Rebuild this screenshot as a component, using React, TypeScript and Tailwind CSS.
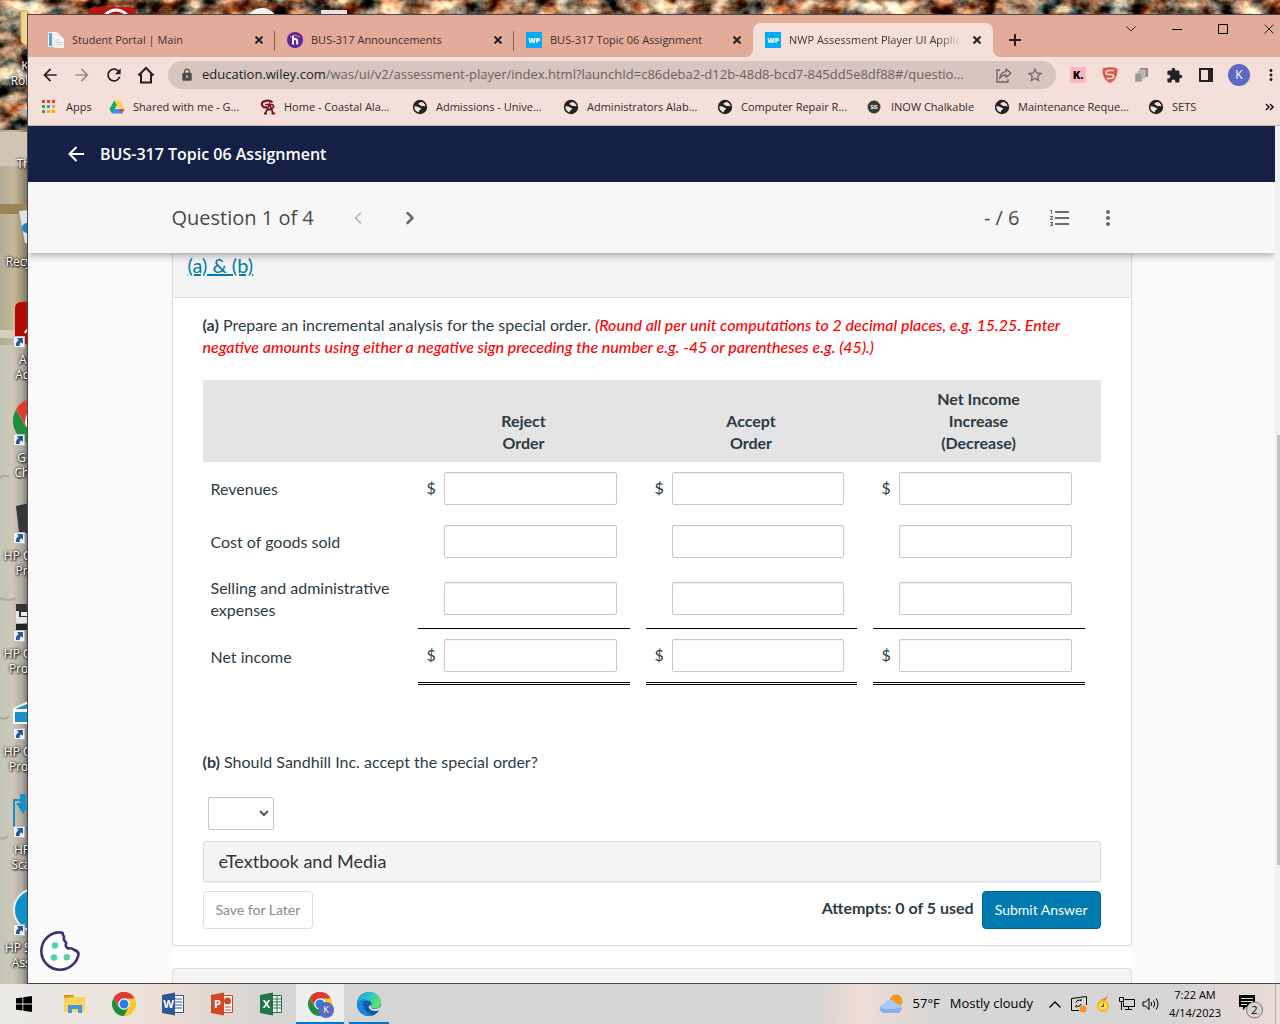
import clsx from 'clsx';
import React, { FC, ReactNode, useState } from 'react';
import { FiChevronLeft, FiChevronRight } from 'react-icons/fi';
import {
  MdArrowBack,
  MdArrowForward,
  MdExtension,
  MdFormatListNumbered,
  MdLock,
  MdMoreVert,
  MdRefresh,
  MdStarBorder,
} from 'react-icons/md';

const UI = "font-['Open_Sans','Noto_Sans',sans-serif]";

/* ---------- small drawings ---------- */

const ChromeIcon: FC<{ size: number; badge?: boolean }> = ({ size, badge }) => (
  <svg width={size} height={size} viewBox="0 0 48 48" aria-hidden="true" className="overflow-visible">
    <circle cx="24" cy="24" r="24" fill="#fff" />
    <path d="M24 24 3.2 12a24 24 0 0 1 41.6 0z" fill="#dd3b30" />
    <path d="M24 24 44.8 12A24 24 0 0 1 24 48z" fill="#fcc934" />
    <path d="M24 24v0L13.6 30 3.2 12A24 24 0 0 0 24 48l10.4-18z" fill="#1e8e3e" />
    <path d="M24 13h21.3A24 24 0 0 0 3.2 12l10.6 18z" fill="#dd3b30" />
    <path d="M24 13h21.3A24 24 0 0 1 24 48l10-18z" fill="#fcc934" />
    <circle cx="24" cy="24" r="11.5" fill="#fff" />
    <circle cx="24" cy="24" r="9" fill="#2b7de9" />
    {badge && (
      <>
        <circle cx="36" cy="36" r="16" fill="#5c6bc0" />
        <text x="36" y="42" fontSize="18" fill="#fff" textAnchor="middle" fontFamily="Open Sans, sans-serif">
          K
        </text>
      </>
    )}
  </svg>
);

const PageIcon = () => (
  <svg width="16" height="16" viewBox="0 0 16 16" aria-hidden="true">
    <path d="M0 0h9l3 3v12H0z" fill="#f3f6f8" />
    <path d="M1 1h3v13H1z" fill="#5ea4cf" />
    <path d="M6 3h6l4 4v9H6z" fill="#fafafa" stroke="#d5d5d5" strokeWidth=".6" />
    <path d="M7.500 8h5M7.500 10.500h7M7.500 13h7" stroke="#c3c9cd" />
  </svg>
);

const HIcon = () => (
  <svg width="16" height="16" viewBox="0 0 16 16" aria-hidden="true">
    <circle cx="8" cy="8" r="8" fill="#5b259f" />
    <path d="M6 4v8.500M6 9c0-2.600 4.200-2.600 4.200 0v3.500" stroke="#fff" strokeWidth="2" fill="none" />
    <path d="M3 5l5-2 5 2" stroke="#e8a33d" fill="none" />
  </svg>
);

const WpIcon = () => (
  <svg width="16" height="16" viewBox="0 0 16 16" aria-hidden="true">
    <path d="M0 0h16v16H0z" fill="#05a9f4" />
    <text x="8" y="10.500" fontSize="7" fontWeight="800" fill="#fff" textAnchor="middle" fontFamily="Open Sans, sans-serif">
      WP
    </text>
  </svg>
);

const AppsIcon = () => (
  <svg width="14" height="14" viewBox="0 0 14 14" aria-hidden="true">
    <path d="M0 0h3v3H0zM5 0h3v3H5zM10 0h3v3h-3z" fill="#ea4335" />
    <path d="M0 5h3v3H0z" fill="#34a853" />
    <path d="M5 5h3v3H5z" fill="#4285f4" />
    <path d="M10 5h3v3h-3zM5 10h3v3H5zM10 10h3v3h-3z" fill="#fbaa05" />
    <path d="M0 10h3v3H0z" fill="#34a853" />
  </svg>
);

const DriveIcon = () => (
  <svg width="16" height="16" viewBox="0 0 16 16" aria-hidden="true">
    <path d="M5.300 1.500 0.500 10l2.600 4.500L8 6.200z" fill="#11a861" />
    <path d="M5.300 1.500h5.400L15.500 10h-5.300z" fill="#ffcf48" />
    <path d="M5.800 10h9.700L13 14.500H3.100z" fill="#4688f4" />
    <path d="M12.800 10.200h2.700L13 14.500l-2.300-4.300z" fill="#e5483b" />
  </svg>
);

const CoastalIcon = () => (
  <svg width="16" height="16" viewBox="0 0 16 16" fill="none" stroke="#7a1128" aria-hidden="true">
    <path d="M12.500 3.500C9.500.500 2 1.500 1.800 5 1.700 8 4.500 9 7 8" strokeWidth="2.200" />
    <path d="M5.500 14 9.500 5l3.500 9M6.500 10.500h6M4 14.500h3M11.500 14.500H15" strokeWidth="1.800" />
    <path d="M5 5.500h6c3.500 0 3.500 4 0 4" strokeWidth="1.600" />
  </svg>
);

const GlobeIcon = () => (
  <svg width="16" height="16" viewBox="0 0 16 16" aria-hidden="true">
    <circle cx="8" cy="8" r="7.200" fill="#202124" />
    <path
      d="M2.300 7.400c1.700-.3 3.500 0 4.800 1 .8.600 2 .4 2 1.300 0 1.100-1.600.8-1.700 1.900 0 .7-.7.900-.7 1.800C4 12.600 2.200 10.200 2.300 7.400zM9.500 3C7.500 3 7.800 4 6.800 4.300c-.8.400-.4 1.500.5 1.400 1-.1 1.200 1 2.100 1.300 1.400.5 2.800.2 4.200.5C13.400 5.500 11.800 3.400 9.500 3z"
      fill="#f5e0d9"
    />
  </svg>
);

const SisIcon = () => (
  <svg width="14" height="14" viewBox="0 0 14 14" aria-hidden="true">
    <circle cx="7" cy="7" r="6.500" fill="#3b3b3b" />
    <text x="7" y="9" fontSize="5" fontWeight="700" fill="#fff" textAnchor="middle" fontFamily="Open Sans, sans-serif">
      SIS
    </text>
  </svg>
);

const CloseIcon: FC<{ size?: number; width?: number }> = ({ size = 8, width = 2 }) => (
  <svg width={size} height={size} viewBox="0 0 8 8" stroke="#202124" aria-hidden="true">
    <path d="M.5.500l7 7M7.500.500l-7 7" strokeWidth={(width * 8) / size} fill="none" />
  </svg>
);

const CookieIcon = () => (
  <svg width="40" height="40" viewBox="0 0 40 40" aria-hidden="true">
    <path
      d="M22.500 1.700C11.500-.2 1.500 8.500 1.300 20c0 10.300 8.400 18.700 18.700 18.700 9.400 0 17.500-7 18.600-16.200-1.300-2.300-2.800-3.300-4.600-3.600-1.400-1.500-3.300-1.800-5.500-1.500-3-.6-3.200-3.300-2.300-5.600-2.500-1.900-3-3.800-2.200-6.200-1.200-1.200-1.400-2.500-1.500-3.900z"
      fill="#fff"
      stroke="#3b3473"
      strokeWidth="2.600"
      strokeLinejoin="round"
    />
    <circle cx="15" cy="14.500" r="3.200" fill="#4cd49c" />
    <circle cx="14" cy="26.500" r="3.200" fill="#4cd49c" />
    <circle cx="26.800" cy="26.200" r="3.200" fill="#4cd49c" />
  </svg>
);

/* ---------- desktop ---------- */

const Wallpaper = () => (
  <svg className="absolute inset-0 -z-10 h-full w-full" preserveAspectRatio="none" aria-hidden="true">
    <defs>
      <filter id="stones" x="0" y="0" width="100%" height="100%" colorInterpolationFilters="sRGB">
        <feTurbulence type="fractalNoise" baseFrequency=".045 .06" numOctaves="4" seed="8" />
        <feColorMatrix values="2.200 0 0 0 -.54  1.900 .6 0 0 -.81  1.600 .8 0 0 -.86  0 0 0 0 1" />
      </filter>
      <linearGradient id="plaster" x1="0" y1="0" x2="1" y2="0">
        <stop offset="0" stopColor="#b3ae98" />
        <stop offset=".5" stopColor="#c4b897" />
        <stop offset=".75" stopColor="#a5997d" />
        <stop offset="1" stopColor="#77705f" />
      </linearGradient>
      <linearGradient id="pillar" x1="0" y1="0" x2="28" y2="0" gradientUnits="userSpaceOnUse">
        <stop offset="0" stopColor="#c2c6b8" />
        <stop offset=".45" stopColor="#cfc8b6" />
        <stop offset=".8" stopColor="#aaa89f" />
        <stop offset="1" stopColor="#77766f" />
      </linearGradient>
    </defs>
    <rect width="100%" height="134" filter="url(#stones)" />
    <rect y="130" width="28" height="240" fill="url(#plaster)" />
    <rect y="132" width="28" height="34" fill="#cfc4b6" />
    <rect y="204" width="28" height="10" fill="#9c8357" />
    <rect y="330" width="28" height="8" fill="#d6cfba" />
    <rect y="345" width="28" height="700" fill="url(#pillar)" />
    <path d="M0 478q5-4 9-1M0 598q8 4 16 0M0 718q6 2 9-2M0 838q5 2 8-2" stroke="#aaa995" strokeWidth="2" fill="none" />
    {/* tops of the icons in the first row, above the window */}
    <rect x="88" y="7" width="48" height="30" rx="6" fill="#b81414" />
    <circle cx="116" cy="24" r="14" fill="none" stroke="#fff" strokeWidth="3" />
    <circle cx="262" cy="24" r="16" fill="#f4f4f4" />
    <path d="M321 10h26v10h-26z" fill="#e5e5e5" />
  </svg>
);

const Shortcut = () => (
  <svg className="absolute bottom-0 left-0" width="12" height="12" viewBox="0 0 12 12" aria-hidden="true">
    <path d="M.500.500h11v11H.500z" fill="#f1f3f6" stroke="#b9bfc6" />
    <path d="M4 2h6v6L8.200 6.200C6.800 7.200 6.500 8.500 6.800 10H3c-.5-2.500.5-4.500 2.600-5.800z" fill="#2b5797" />
  </svg>
);

interface DesktopItem {
  lines: string[];
  art: ReactNode;
  link?: boolean;
}

const desktopItems: DesktopItem[] = [
  { lines: ['Kathy', 'Robinson'], art: <path d="M8 3h30v36l-26-2-4-4z" fill="#ecd78c" stroke="#c9ae5d" /> },
  { lines: ['This PC'], art: <path d="M2 6 18 2l26 4-20 6z" fill="#aab0b3" /> },
  {
    lines: ['Recycle Bin'],
    art: (
      <>
        <path d="M6 7 42 4l-6 38-24-3z" fill="#dfe3e6" />
        <circle cx="14" cy="24" r="5" fill="#1d7fd1" />
      </>
    ),
  },
  {
    lines: ['Adobe', 'Acrobat'],
    link: true,
    art: (
      <>
        <rect x="2" width="44" height="42" rx="6" fill="#b30b00" />
        <path d="M12 31c1-4 8-5 12-21" stroke="#fff" strokeWidth="2" fill="none" />
      </>
    ),
  },
  { lines: ['Google', 'Chrome'], link: true, art: <g transform="translate(0 -2)"><ChromeIcon size={46} /></g> },
  { lines: ['HP OfficeJet', 'Pro 802'], link: true, art: <path d="M3 8 30 2v36L6 34z" fill="#34383b" /> },
  {
    lines: ['HP OfficeJet', 'Pro Series'],
    link: true,
    art: (
      <>
        <path d="M3 8h34v7H3z" fill="#333" />
        <path d="M3 15h34v12H3z" fill="#e5e5e5" />
        <path d="M6 15h31v6H6z" fill="#333" />
        <path d="M3 28h34v6H3z" fill="#222" />
        <path d="M8 16h12v4H8z" fill="#eee" />
      </>
    ),
  },
  {
    lines: ['HP OfficeJet', 'Pro Series'],
    link: true,
    art: (
      <>
        <path d="M0 14 26 2v28H0z" fill="#f7f7f7" />
        <path d="M2 15 26 5v6L12 15zM2 18h24v10H2z" fill="#1690c6" />
      </>
    ),
  },
  {
    lines: ['HP Print', 'Scan Doc'],
    link: true,
    art: (
      <>
        <path d="M8 8H1v28h28" stroke="#1690c6" strokeWidth="2" fill="none" />
        <path d="M7 2h6v9h4l-7 11L3 11h4z" fill="#1690c6" />
      </>
    ),
  },
  { lines: ['HP Support', 'Assistant'], link: true, art: <circle cx="22" cy="20" r="21" fill="#0e8fce" stroke="#f2f2f2" strokeWidth="2" /> },
];

const Desktop = () => (
  <ul className="w-[27px] shrink-0 overflow-hidden">
    {desktopItems.map((item, i) => (
      <li key={i} className="flex h-[98px] w-[74px] flex-col items-center pt-1.5">
        <div className="relative h-12 w-12">
          <svg width="46" height="48" viewBox="0 0 46 44" aria-hidden="true">
            {item.art}
          </svg>
          {item.link && <Shortcut />}
        </div>
        <div className="pt-1 text-center text-xs leading-[15px] whitespace-nowrap text-white [text-shadow:1px_1px_2px_#000,0_0_3px_#000]">
          {item.lines.map((line) => (
            <div key={line}>{line}</div>
          ))}
        </div>
      </li>
    ))}
  </ul>
);

/* ---------- browser ---------- */

const tabs = [
  { title: 'Student Portal | Main', icon: <PageIcon /> },
  { title: 'BUS-317 Announcements', icon: <HIcon /> },
  { title: 'BUS-317 Topic 06 Assignment', icon: <WpIcon /> },
  { title: 'NWP Assessment Player UI Application', icon: <WpIcon />, active: true },
];

const TabStrip = () => (
  <div className="flex h-[42px] items-end bg-[#e3ab9a] pl-2">
    {tabs.map((tab, i) => (
      <div
        key={tab.title}
        className={clsx(
          'relative flex h-[34px] items-center px-3 text-[#45302c]',
          tab.active
            ? 'w-[240px] rounded-t-lg bg-[#f5e0d9] before:absolute before:bottom-0 before:-left-2 before:size-2 before:bg-[radial-gradient(circle_at_0_0,transparent_8px,#f5e0d9_8px)] after:absolute after:-right-2 after:bottom-0 after:size-2 after:bg-[radial-gradient(circle_at_100%_0,transparent_8px,#f5e0d9_8px)]'
            : 'w-[239px]'
        )}
      >
        <span className="mr-2 shrink-0">{tab.icon}</span>
        <span
          className={clsx(
            'min-w-0 flex-1 overflow-hidden text-[11px] whitespace-nowrap',
            tab.active && '[mask-image:linear-gradient(to_right,#000_85%,transparent_98%)]'
          )}
        >
          {tab.title}
        </span>
        <button aria-label="Close tab" className="ml-2">
          <CloseIcon />
        </button>
        {i < 2 && <span className="absolute top-2 right-0 h-5 w-px bg-[#8a5f54]" />}
      </div>
    ))}
    <button aria-label="New tab" className="flex h-[34px] w-11 items-center justify-center">
      <svg width="12" height="12" viewBox="0 0 12 12" stroke="#202124" strokeWidth="2">
        <path d="M6 0v12M0 6h12" />
      </svg>
    </button>
    <div className="ml-auto flex h-full shrink-0 items-start text-[#202124]">
      <button aria-label="Search tabs" className="flex h-[28px] w-[46px] items-center justify-center">
        <svg width="10" height="6" viewBox="0 0 10 6" fill="none" stroke="currentColor">
          <path d="M.500.500 5 5 9.500.500" />
        </svg>
      </button>
      <button aria-label="Minimize" className="flex h-[28px] w-[46px] items-center justify-center">
        <span className="h-px w-2.5 bg-black" />
      </button>
      <button aria-label="Maximize" className="flex h-[28px] w-[46px] items-center justify-center">
        <span className="size-2.5 border border-black" />
      </button>
      <button aria-label="Close" className="flex h-[28px] w-[34px] items-center justify-center pl-3">
        <CloseIcon size={10} width={1} />
      </button>
    </div>
  </div>
);

const Toolbar = () => (
  <div className="flex h-9 items-center bg-[#f5e0d9] pl-3 text-[#202124]">
    <div className="flex shrink-0 items-center gap-3">
      <button aria-label="Back"><MdArrowBack size={20} /></button>
      <button aria-label="Forward" className="text-[#9b8f8b]"><MdArrowForward size={20} /></button>
      <button aria-label="Reload"><MdRefresh size={20} /></button>
      <button aria-label="Home">
        <svg width="20" height="20" viewBox="0 0 20 20" fill="none" stroke="currentColor" strokeWidth="2">
          <path d="M2.500 10.500 10 3l7.500 7.500M5 9v8.500h10V9" />
        </svg>
      </button>
    </div>
    <div className="ml-3 flex h-7 min-w-0 flex-1 items-center rounded-full bg-[#d7c5be] px-3">
      <MdLock size={14} className="mr-2 shrink-0 text-[#4d4a4a]" />
      <div className="min-w-0 flex-1 overflow-hidden text-[13px] whitespace-nowrap text-[#6b6260]">
        <span className="text-[#202124]">education.wiley.com</span>
        /was/ui/v2/assessment-player/index.html?launchId=c86deba2-d12b-48d8-bcd7-845dd5e8df88#/questio...
      </div>
      <button aria-label="Share" className="ml-3 shrink-0 text-[#6b6260]">
        <svg width="16" height="16" viewBox="0 0 16 16" fill="none" stroke="currentColor" strokeWidth="1.300">
          <path d="M4 3H1v12h11v-3" />
          <path d="M10 2l5 4.200-5 4.200V8C7 8 5 9 3.500 11.500 4 7.500 6.500 5 10 4.600z" strokeLinejoin="round" />
        </svg>
      </button>
      <button aria-label="Bookmark this page" className="ml-[14px] shrink-0 text-[#6b6260]"><MdStarBorder size={18} /></button>
    </div>
    <div className="ml-3 flex shrink-0 items-center gap-3">
      <button className="flex size-5 items-center justify-center" aria-label="Klarna">
        <span className="flex size-4 items-center justify-center bg-[#ffb3c7] text-[11px] font-extrabold text-black">K.</span>
      </button>
      <button className="flex size-5 items-center justify-center" aria-label="Shield extension">
        <svg width="16" height="16" viewBox="0 0 16 16">
          <path d="M.500 1.500Q8-1 15.500 1.500C16 9 13 14 8 16 3 14 0 9 .500 1.500z" fill="#d95b48" />
          <path d="M12 3.500H7C3 3.500 3 7.500 6.500 7.500H9c3.500 0 3.500 4 0 4H4.500" stroke="#f5e0d9" strokeWidth="1.600" fill="none" />
        </svg>
      </button>
      <button className="flex size-5 items-center justify-center" aria-label="Copy extension">
        <svg width="16" height="14" viewBox="0 0 16 14">
          <path d="M6 0h8v9H6z" fill="#8d8986" />
          <path d="M4 2h7v9H4z" fill="#b5b0ad" stroke="#f5e0d9" strokeWidth=".5" />
          <path d="M1 5h7v9H1z" fill="#9d9996" stroke="#f5e0d9" strokeWidth=".5" />
        </svg>
      </button>
      <button aria-label="Extensions" className="flex size-5 items-center justify-center"><MdExtension size={17} /></button>
      <button aria-label="Side panel" className="flex size-5 items-center justify-center">
        <span className="h-[14px] w-[14px] border-2 border-r-[5px] border-[#202124]" />
      </button>
      <button aria-label="Profile" className="flex size-[22px] items-center justify-center rounded-full bg-[#5c6bc0] text-xs text-white">
        K
      </button>
      <button aria-label="Menu"><MdMoreVert size={18} /></button>
    </div>
  </div>
);

const bookmarks = [
  { title: 'Apps', icon: <AppsIcon />, width: 'w-[67px]' },
  { title: 'Shared with me - G...', icon: <DriveIcon />, width: 'w-[151px]' },
  { title: 'Home - Coastal Ala...', icon: <CoastalIcon />, width: 'w-[152px]' },
  { title: 'Admissions - Unive...', icon: <GlobeIcon />, width: 'w-[151px]' },
  { title: 'Administrators Alab...', icon: <GlobeIcon />, width: 'w-[154px]' },
  { title: 'Computer Repair R...', icon: <GlobeIcon />, width: 'w-[150px]' },
  { title: 'INOW Chalkable', icon: <SisIcon />, width: 'w-[127px]' },
  { title: 'Maintenance Reque...', icon: <GlobeIcon />, width: 'w-[154px]' },
  { title: 'SETS', icon: <GlobeIcon />, width: 'w-[60px]' },
];

const BookmarkBar = () => (
  <nav className="flex h-[33px] items-center border-b border-[#c9b8b2] bg-[#f5e0d9] pb-1 pl-[14px] text-[11px] text-[#33292a]">
    {bookmarks.map((b) => (
      <a key={b.title} href="#" className={clsx('flex shrink-0 items-center whitespace-nowrap', b.width)}>
        <span className="flex w-6 shrink-0 items-center">{b.icon}</span>
        {b.title}
      </a>
    ))}
    <button aria-label="More bookmarks" className="mr-1.5 ml-auto">
      <svg width="9" height="8" viewBox="0 0 9 8" fill="none" stroke="#202124" strokeWidth="1.600">
        <path d="M1 1l3 3-3 3M5 1l3 3-3 3" />
      </svg>
    </button>
  </nav>
);

/* ---------- assessment page ---------- */

const columns = [['Reject', 'Order'], ['Accept', 'Order'], ['Net Income', 'Increase', '(Decrease)']];

const rows = [
  { label: 'Revenues', dollar: true, cell: 'h-[53px]' },
  { label: 'Cost of goods sold', dollar: false, cell: 'h-[53px]' },
  { label: 'Selling and administrative expenses', dollar: false, cell: 'h-[61px] border-b border-black' },
  { label: 'Net income', dollar: true, cell: 'h-[56px] border-b-3 border-double border-black' },
];

const AnalysisTable = () => (
  <table className="mt-[22px] w-full table-fixed border-collapse">
    <colgroup>
      <col />
      <col className="w-[228px]" />
      <col className="w-[227px]" />
      <col className="w-[228px]" />
      <col className="w-2" />
    </colgroup>
    <thead>
      <tr className="bg-[#e4e4e4]">
        <td />
        {columns.map((words) => (
          <th key={words[0]} scope="col" className="py-2 text-center align-bottom font-bold">
            {words.map((w) => (
              <span key={w} className="block">{w}</span>
            ))}
          </th>
        ))}
        <td />
      </tr>
    </thead>
    <tbody>
      {rows.map((row) => (
        <tr key={row.label}>
          <th scope="row" className="px-2 text-left font-normal">{row.label}</th>
          {columns.map((words) => (
            <td key={words[0]} className="px-2 py-0">
              <div className={clsx('flex items-center pr-[13px] pl-[9px]', row.cell)}>
                <span className="w-[17px] shrink-0 pb-0.5">{row.dollar && '$'}</span>
                <input
                  type="text"
                  aria-label={`${row.label}, ${words.join(' ')}`}
                  className="h-[33px] w-full min-w-0 rounded-xs border border-[#c8c8c8] bg-white px-2 inset-shadow-2xs"
                />
              </div>
            </td>
          ))}
          <td />
        </tr>
      ))}
    </tbody>
  </table>
);

const QuestionBar = () => (
  <div className="relative z-10 h-[71px] shrink-0 bg-[#f7f7f7] text-xl text-[#494949] shadow-[0_2px_8px_rgba(0,0,0,0.35)]">
    <div className="mx-auto flex h-full max-w-[960px] items-center">
      <h2>Question 1 of 4</h2>
      <div className="ml-5 flex gap-1">
        <button aria-label="Previous question" className="flex size-12 items-center justify-center text-[#b5b5b5]">
          <FiChevronLeft size={20} />
        </button>
        <button aria-label="Next question" className="flex size-12 items-center justify-center text-[#6b6b6b]">
          <FiChevronRight size={20} strokeWidth={3} />
        </button>
      </div>
      <span className="mr-4 ml-auto">- / 6</span>
      <button aria-label="Question list" className="flex size-12 items-center justify-center text-[#6b6b6b]">
        <MdFormatListNumbered size={24} />
      </button>
      <button aria-label="More options" className="flex size-12 items-center justify-center text-[#6b6b6b]">
        <MdMoreVert size={24} />
      </button>
    </div>
  </div>
);

const Player = () => {
  const [decision, setDecision] = useState<string>('');

  return (
    <main className="relative flex min-h-0 min-w-0 flex-1 flex-col overflow-hidden bg-[#fafafa]">
      <header className="flex h-14 shrink-0 items-center gap-4 bg-[#142045] pl-10 text-white">
        <button aria-label="Back to course">
          <svg width="16" height="16" viewBox="0 0 16 16" fill="none" stroke="currentColor" strokeWidth="2">
            <path d="M16 8H2M8.500 1 1.500 8l7 7" />
          </svg>
        </button>
        <h1 className="font-semibold">BUS-317 Topic 06 Assignment</h1>
      </header>
      <QuestionBar />
      <div className="mx-auto min-h-0 w-full max-w-[960px] flex-1 bg-white font-['Lato',sans-serif] text-base leading-[22px] text-[#2d3b45]">
        <section className="rounded-b-sm border border-t-0 border-[#ddd] shadow-xs">
          <div className="border-b border-[#ddd] bg-[#f4f4f4] px-[15px] pb-5 text-xl leading-6">
            <a href="#" className="text-[#007aaf] underline">(a) &amp; (b)</a>
          </div>
          <div className="px-[30px] py-4">
            <p>
              <b>(a)</b> Prepare an incremental analysis for the special order.{' '}
              <em className="font-medium text-[#f00]">
                (Round all per unit computations to 2 decimal places, e.g. 15.25. Enter negative amounts using either a
                negative sign preceding the number e.g. -45 or parentheses e.g. (45).)
              </em>
            </p>
            <AnalysisTable />
            <p className="mt-[66px]">
              <b>(b)</b> Should Sandhill Inc. accept the special order?
            </p>
            <div className="relative mt-6 ml-[5px] w-[66px]">
              <select
                aria-label="Accept the special order?"
                value={decision}
                onChange={(e) => setDecision(e.target.value)}
                className="block h-[33px] w-full appearance-none rounded-xs border border-[#c8c8c8] bg-white px-1 inset-shadow-2xs"
              >
                <option value=""></option>
                <option value="yes">Yes</option>
                <option value="no">No</option>
              </select>
              <svg className="pointer-events-none absolute top-3 right-1" width="12" height="9" viewBox="0 0 12 9">
                <path d="M2 2l4 4 4-4" fill="none" stroke="#555" strokeWidth="2" />
              </svg>
            </div>
            <button className="mt-[11px] block h-[41px] w-full rounded-xs border border-[#ddd] bg-[#f4f4f4] px-[15px] pb-0.5 text-left text-lg leading-5 text-[#333] shadow-2xs">
              eTextbook and Media
            </button>
            <div className="mt-[9px] flex">
              <button className="h-[38px] rounded-sm border border-[#ddd] bg-white px-3 text-sm text-[#8a8a8a]">Save for Later</button>
              <span className="mr-2 ml-auto pt-1.5 font-bold">Attempts: 0 of 5 used</span>
              <button className="h-[38px] rounded-sm border border-[#00658f] bg-[#007aaf] px-3 text-sm text-white">
                Submit Answer
              </button>
            </div>
          </div>
        </section>
        <section className="mt-[22px] h-10 rounded-t-sm border border-[#ddd] bg-[#f4f4f4]" />
      </div>
      <button aria-label="Cookie preferences" className="absolute bottom-3 left-3">
        <CookieIcon />
      </button>
    </main>
  );
};

/* ---------- taskbar ---------- */

const OfficeIcon: FC<{ letter: string; color: string; children: ReactNode }> = ({ letter, color, children }) => (
  <svg width="24" height="24" viewBox="0 0 24 24" aria-hidden="true">
    <path d="M12 3.500h10.500v17H12z" fill="#fff" stroke={color} />
    {children}
    <path d="M1 3 14 .500v23L1 21z" fill={color} />
    <text x="7.500" y="16" fontSize="11" fontWeight="700" fill="#fff" textAnchor="middle" fontFamily="Open Sans, sans-serif">
      {letter}
    </text>
  </svg>
);

const pinned = [
  {
    name: 'File Explorer',
    icon: (
      <svg width="24" height="24" viewBox="0 0 24 24">
        <path d="M1 3h9l2 3H1z" fill="#d99a06" />
        <path d="M1 6l10-1h11v15H1z" fill="#ffd35c" />
        <path d="M5 21v-8h14v8h-4v-4H9v4z" fill="#3f9bdc" />
      </svg>
    ),
  },
  { name: 'Google Chrome', icon: <ChromeIcon size={24} /> },
  {
    name: 'Word',
    icon: (
      <OfficeIcon letter="W" color="#2b579a">
        <path d="M14 7h7M14 10h7M14 13h7M14 16h7" stroke="#2b579a" strokeWidth="1.200" />
      </OfficeIcon>
    ),
  },
  {
    name: 'PowerPoint',
    icon: (
      <OfficeIcon letter="P" color="#d24726">
        <path d="M15 15h6M15 18h6" stroke="#d24726" strokeWidth="1.200" />
        <circle cx="17.500" cy="9" r="3.500" fill="#d24726" />
      </OfficeIcon>
    ),
  },
  {
    name: 'Excel',
    icon: (
      <OfficeIcon letter="X" color="#217346">
        <path d="M14 7h8M14 10h8M14 13h8M14 16h8M18 4v16" stroke="#217346" />
      </OfficeIcon>
    ),
  },
  { name: 'Chrome - K', icon: <ChromeIcon size={24} badge />, cls: 'bg-[#eeeeee] border-b-2 border-[#0078d7] pt-0.5' },
  {
    name: 'Microsoft Edge',
    cls: 'relative after:absolute after:bottom-0 after:left-1 after:h-0.5 after:w-10 after:bg-[#0078d7]',
    icon: (
      <svg width="24" height="24" viewBox="0 0 24 24">
        <defs>
          <linearGradient id="edgeTop" x1="0" y1="0" x2="1" y2=".4">
            <stop offset="0" stopColor="#1f9fdf" />
            <stop offset=".5" stopColor="#2cc3d6" />
            <stop offset="1" stopColor="#5fe06a" />
          </linearGradient>
        </defs>
        <circle cx="12" cy="12" r="12" fill="#0c59a4" />
        <path d="M0 12C0 5 5.500 0 12 0s12 5 12 10.500c0 4-3 6-6.500 6-3 0-4-1-3.300-2.500 1-2 .3-5.500-4.200-5.500C5 8.500 1 10 0 12z" fill="url(#edgeTop)" />
        <path d="M0 12c1-3 5-5.500 9-4.500-4 2-3.500 8 .5 12 2 2 4.500 3.500 7 3.500C9 26 0 21 0 12z" fill="#1787d8" />
        <path d="M14.200 14c-.7 1.500.3 3 3.300 3 2.500 0 4.500-.8 6.500-3v3l-2 1.500c-3 1-8 .5-9.800-2-1.200-2 .5-4.500 2-2.500z" fill="#d9dde0" />
      </svg>
    ),
  },
];

const Taskbar = () => (
  <footer className="flex h-10 shrink-0 items-stretch bg-[linear-gradient(to_right,#e8e8e5_0%,#ebe4de_9%,#ecdcd2_13%,#d6d5d4_20%,#d6d5d5_64%,#f0ddd4_67%,#d6d6d6_73%,#d6d5d5_92%,#eadbd5_100%)] text-black">
    <button aria-label="Start" className="flex w-[51px] items-center pl-4">
      <svg width="16" height="16" viewBox="0 0 16 16">
        <path d="M0 2.300 6.500 1.400v6.200H0zM7.300 1.300 16 0v7.600H7.300zM0 8.400h6.500v6.200L0 13.700zM7.300 8.400H16V16l-8.700-1.300z" />
      </svg>
    </button>
    <div className="flex gap-px">
      {pinned.map((p) => (
        <button key={p.name} aria-label={p.name} className={clsx('flex w-12 items-center justify-center', p.cls)}>
          {p.icon}
        </button>
      ))}
    </div>
    <div className="ml-auto flex items-center">
      <button className="mr-[10px] flex items-center gap-2.5 text-[13px] whitespace-nowrap">
        <svg width="24" height="20" viewBox="0 0 24 20">
          <circle cx="17" cy="7" r="6.500" fill="#f59a1b" />
          <path d="M5 19a4.500 4.500 0 0 1 0-9 6.500 6.500 0 0 1 12-.5A5 5 0 0 1 19 19z" fill="#a9c8f5" />
          <path d="M5 19a4.500 4.500 0 0 1-3.500-6c5 3 14 3 21 0A5 5 0 0 1 19 19z" fill="#86aeea" />
        </svg>
        <span>57°F</span>
        <span>Mostly cloudy</span>
      </button>
      <div className="flex">
        <button aria-label="Show hidden icons" className="flex w-6 items-center justify-center">
          <svg width="12" height="7" viewBox="0 0 12 7" fill="none" stroke="#000" strokeWidth="1.300">
            <path d="M.500 6.500 6 1l5.500 5.500" />
          </svg>
        </button>
        <button aria-label="Update" className="flex w-6 items-center justify-center">
          <svg width="18" height="18" viewBox="0 0 18 18" fill="none" stroke="#000">
            <path d="M9 15.500H1.500v-12l15-2V10" />
            <path d="M6 7.500a3 3 0 0 1 5-1.500V4M11 9a3 3 0 0 1-5 1.500v2" />
            <circle cx="13" cy="14" r="3.500" fill="#f7941d" stroke="none" />
          </svg>
        </button>
        <button aria-label="Reminder" className="flex w-6 items-center justify-center">
          <svg width="14" height="18" viewBox="0 0 14 18">
            <path d="M1.500 9C4 4 8 4 12 1L9.500 6z" fill="#f5821f" />
            <circle cx="7" cy="11" r="6" fill="#fcb90d" />
            <circle cx="7" cy="11" r="4" fill="#fde15a" />
            <path d="M7.500 8.500v3H5" stroke="#444" fill="none" />
          </svg>
        </button>
        <button aria-label="Network" className="flex w-6 items-center justify-center">
          <svg width="16" height="16" viewBox="0 0 16 16" fill="none" stroke="#000">
            <path d="M5.500 3.500h10v7h-11v-4M.500 1.500h4v4h-4zM2.500 5.500v8.500M9.500 10.500v3M6 13.500h7" />
          </svg>
        </button>
        <button aria-label="Volume" className="flex w-6 items-center justify-center">
          <svg width="18" height="14" viewBox="0 0 18 14" fill="none" stroke="#000">
            <path d="M1 5h2.500L7 1.500v11L3.500 9H1zM9 5q1.500 2 0 4M11.500 3.500q2.500 3.500 0 7M14 1.500q4 5.500 0 11" />
          </svg>
        </button>
      </div>
      <div className="w-[64px] text-center text-[11px] leading-[18px] whitespace-nowrap">
        <div>7:22 AM</div>
        <div>4/14/2023</div>
      </div>
      <button aria-label="2 notifications" className="mr-1 ml-2 flex h-full w-9 items-center justify-center pt-1">
        <svg width="28" height="28" viewBox="0 0 28 28">
          <path d="M0 3h16v12H7l-3 3v-3H0z" />
          <path d="M2 6.500h12M2 9.500h12M2 12.500h6" stroke="#ddd" />
          <circle cx="15.500" cy="18" r="8" fill="#d8d4d2" stroke="#777" />
          <text x="15.500" y="22" fontSize="11" textAnchor="middle" fontFamily="Open Sans, sans-serif">
            2
          </text>
        </svg>
      </button>
      <span className="h-full w-[5px] border-l border-[#b9aeaa]" />
    </div>
  </footer>
);

const App = () => {
  return (
    <div className={clsx('relative isolate flex h-screen flex-col overflow-hidden', UI)}>
      <Wallpaper />
      <div className="flex min-h-0 flex-1">
        <Desktop />
        <div className="mt-[14px] flex min-w-0 flex-1 flex-col border-t border-b border-l border-[#4a4644]">
          <TabStrip />
          <Toolbar />
          <BookmarkBar />
          <div className="flex min-h-0 flex-1">
            <Player />
            <div className="flex w-[5px] shrink-0 flex-col bg-[#f1f1f1] pl-0.5">
              <span className="flex-[309]" />
              <span className="flex-[430] bg-[#c1c1c1]" />
              <span className="flex-[118]" />
            </div>
          </div>
        </div>
      </div>
      <Taskbar />
    </div>
  );
};

export default App;
